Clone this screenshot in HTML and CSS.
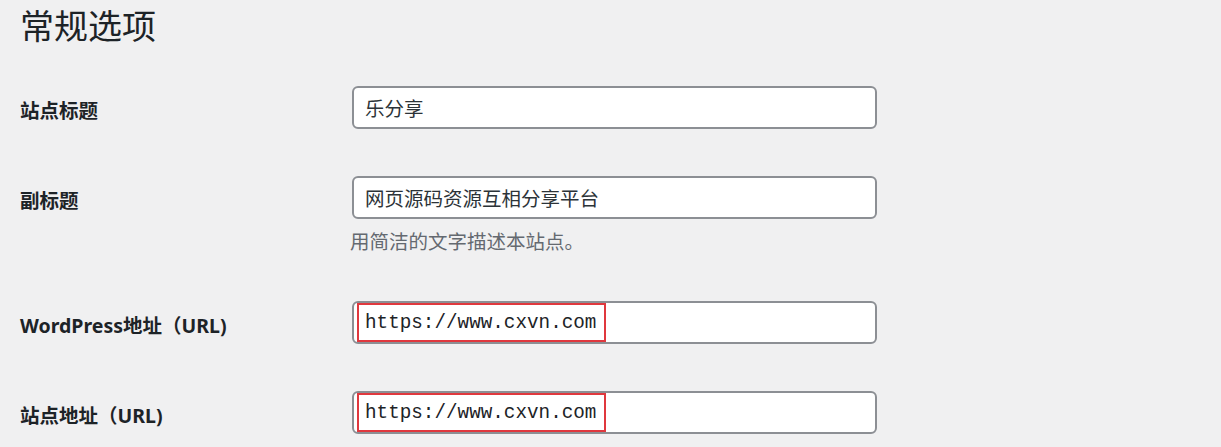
FILE: index.html
```html
<!DOCTYPE html>
<html lang="zh-CN">
<head>
    <meta charset="UTF-8">
    <title>常规选项</title>
    <link rel="stylesheet" href="styles.css">
</head>
<body>
    <div class="wrap">
        <h1>常规选项</h1>

        <div class="form-table">
            <div class="row">
                <label class="row-label">站点标题</label>
                <div class="row-field">
                    <div class="text-field">乐分享</div>
                </div>
            </div>

            <div class="row">
                <label class="row-label">副标题</label>
                <div class="row-field">
                    <div class="text-field">网页源码资源互相分享平台</div>
                    <p class="description">用简洁的文字描述本站点。</p>
                </div>
            </div>

            <div class="row">
                <label class="row-label">WordPress地址（URL)</label>
                <div class="row-field">
                    <div class="text-field url-field">
                        <span class="marked">https://www.cxvn.com</span>
                    </div>
                </div>
            </div>

            <div class="row">
                <label class="row-label">站点地址（URL)</label>
                <div class="row-field">
                    <div class="text-field url-field">
                        <span class="marked">https://www.cxvn.com</span>
                    </div>
                </div>
            </div>
        </div>
    </div>
</body>
</html>
```

FILE: styles.css
```css
:root {
    --bg: #f0f0f1;
    --text: #1d2327;
    --field-text: #2c3338;
    --muted: #646970;
    --border: #8c8f94;
    --mark: #e0383e;
}

* {
    margin: 0;
    padding: 0;
    box-sizing: border-box;
}

body {
    font-family: "Noto Sans", "Noto Sans CJK SC", sans-serif;
    background-color: var(--bg);
    color: var(--text);
}

.wrap {
    padding: 3px 0 0 20px;
}

h1 {
    font-size: 34px;
    font-weight: 400;
    line-height: 46px;
    margin-bottom: 37px;
}

.row {
    display: grid;
    grid-template-columns: 332px 525px;
    align-items: start;
    margin-bottom: 47px;
}

.row-label {
    display: block;
    font-size: 19.5px;
    font-weight: 700;
    line-height: 37px;
    padding-top: 6px;
    white-space: nowrap;
}

.text-field {
    height: 43px;
    background: #fff;
    border: 2px solid var(--border);
    border-radius: 6px;
    font-size: 19.5px;
    color: var(--field-text);
    display: flex;
    align-items: center;
    padding-left: 11px;
}

.url-field {
    align-items: stretch;
    padding-left: 3px;
}

.marked {
    display: flex;
    align-items: center;
    border: 2px solid var(--mark);
    padding: 0 8px 0 6px;
    font-family: "Liberation Mono", "DejaVu Sans Mono", monospace;
    font-size: 19.3px;
    color: var(--text);
}

.description {
    margin-top: 10px;
    margin-left: -2px;
    font-size: 19.5px;
    line-height: 25px;
    color: var(--muted);
}
```
